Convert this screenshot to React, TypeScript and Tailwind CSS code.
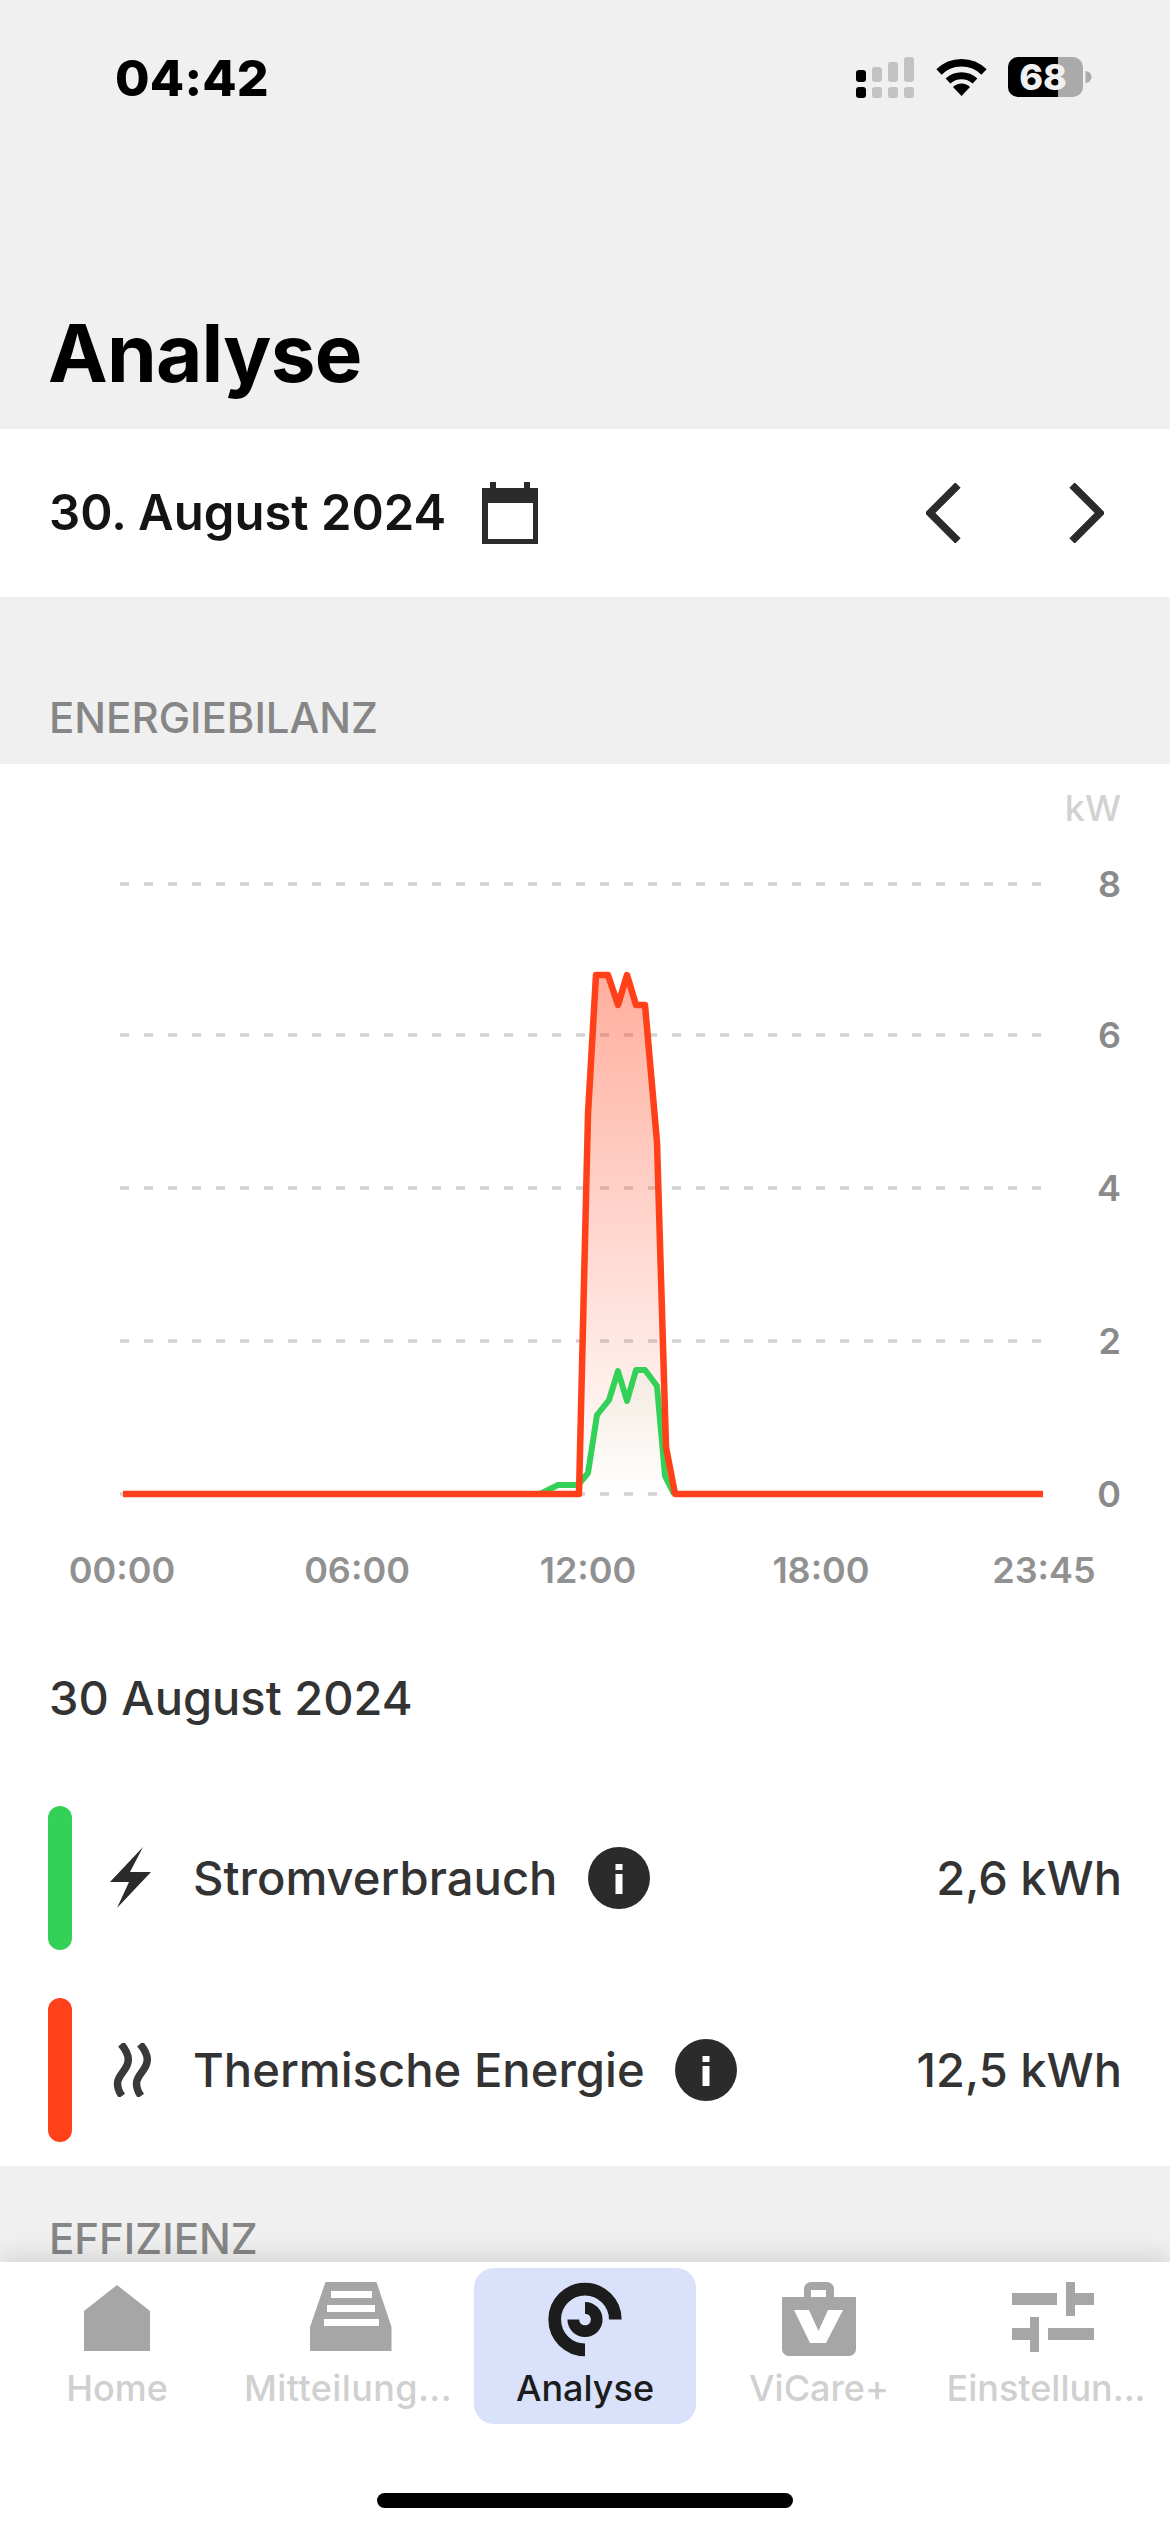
const GRID_Y = [884, 1035, 1188, 1341, 1494]
const Y_LABELS = ['8', '6', '4', '2', '0']
const X_LABELS: [string, number][] = [['00:00', 122], ['06:00', 357], ['12:00', 588], ['18:00', 821], ['23:45', 1044]]

const RED =
  '123,1494 579,1494 588,1114 596,975 608,975 618,1005 627,975 636,1005 645,1005 657,1142 666,1447 675,1494 1043,1494'
const GREEN =
  '540,1494 558,1485 578,1485 588,1473 597,1415 609,1400 618,1371 627,1401 636,1370 645,1370 657,1386 665,1476 674,1494'

function StatusIcons() {
  return (
    <svg width="236" height="48" viewBox="0 -4 236 48" className="block">
      {/* signal, first column filled */}
      <rect x="0" y="13" width="10" height="12" rx="3" fill="#000" />
      <rect x="16" y="10" width="10" height="15" rx="3" fill="#c2c2c2" />
      <rect x="32" y="5" width="10" height="20" rx="3" fill="#c2c2c2" />
      <rect x="48" y="0" width="10" height="25" rx="3" fill="#c2c2c2" />
      <rect x="0" y="30" width="10" height="11" rx="3" fill="#000" />
      <rect x="16" y="30" width="10" height="11" rx="3" fill="#c2c2c2" />
      <rect x="32" y="30" width="10" height="11" rx="3" fill="#c2c2c2" />
      <rect x="48" y="30" width="10" height="11" rx="3" fill="#c2c2c2" />
      {/* wifi */}
      <g transform="translate(3 0)">
        <path d="M80 15 A32 32 0 0 1 125 15" fill="none" stroke="#000" strokeWidth="7.5" />
        <path d="M89 24 A20 20 0 0 1 116 24" fill="none" stroke="#000" strokeWidth="7" />
        <path d="M102.500 39 L94 30 A12 12 0 0 1 111 30 Z" fill="#000" />
      </g>
      {/* battery */}
      <rect x="152" y="0" width="75" height="40" rx="10" fill="#aaa" />
      <path d="M162 0 H202 V40 H162 A10 10 0 0 1 152 30 V10 A10 10 0 0 1 162 0 Z" fill="#000" />
      <path d="M229.500 14 A6 6 0 0 1 229.500 26 Z" fill="#aaa" />
      <text x="187" y="33" textAnchor="middle" fontSize="36" fontWeight="800" fill="#f0f0f0">
        68
      </text>
    </svg>
  )
}

function EnergyChart() {
  return (
    <svg width="1170" height="856" viewBox="0 764 1170 856" className="block">
      <defs>
        <linearGradient id="redFill" x1="0" y1="975" x2="0" y2="1494" gradientUnits="userSpaceOnUse">
          <stop offset="0" stopColor="#ff4019" stopOpacity="0.42" />
          <stop offset="1" stopColor="#ff4019" stopOpacity="0" />
        </linearGradient>
        <linearGradient id="greenFill" x1="0" y1="1370" x2="0" y2="1494" gradientUnits="userSpaceOnUse">
          <stop offset="0" stopColor="#33d158" stopOpacity="0.05" />
          <stop offset="1" stopColor="#33d158" stopOpacity="0" />
        </linearGradient>
      </defs>

      {GRID_Y.map(y => (
        <line key={y} x1="120" x2="1041" y1={y} y2={y} stroke="#d2d2d2" strokeWidth="3.5" strokeDasharray="9 15" />
      ))}

      <polygon points={RED} fill="url(#redFill)" />
      <polygon points={GREEN} fill="url(#greenFill)" />
      <polyline points={GREEN} fill="none" stroke="#33d158" strokeWidth="6" strokeLinejoin="round" />
      <polyline points={RED} fill="none" stroke="#ff4019" strokeWidth="6.500" strokeLinejoin="round" />

      <text x="1121" y="821" textAnchor="end" fontSize="36" fontWeight="500" fill="#d2d2d2">
        kW
      </text>
      {Y_LABELS.map((label, i) => (
        <text key={label} x="1121" y={GRID_Y[i] + 13} textAnchor="end" fontSize="36" fontWeight="600" fill="#8a8a8a">
          {label}
        </text>
      ))}
      {X_LABELS.map(([label, x]) => (
        <text key={label} x={x} y="1583" textAnchor="middle" fontSize="36" fontWeight="600" fill="#919191">
          {label}
        </text>
      ))}
    </svg>
  )
}

function InfoDot() {
  return (
    <svg width="62" height="62" viewBox="0 0 62 62" className="block shrink-0">
      <circle cx="31" cy="31" r="31" fill="#2b2b2b" />
      <rect x="27.500" y="17" width="7" height="6" fill="#fff" />
      <rect x="27.500" y="27" width="7" height="20" fill="#fff" />
    </svg>
  )
}

function BoltIcon() {
  return (
    <svg width="42" height="62" viewBox="0 0 42 62" className="block">
      <path d="M33 0 L20 25 H41 L7 61 L19 35 H0 Z" fill="#2b2b2b" />
    </svg>
  )
}

function HeatIcon() {
  return (
    <svg width="40" height="54" viewBox="0 0 40 54" className="block ml-[3px]">
      <path d="M8 1 C14 8 16 14 15 19 C14 27 5 32 4.500 40 C4.500 45 6 49 9 53" fill="none" stroke="#3a3a3a" strokeWidth="7.500" />
      <path d="M27 1 C33 8 35 14 34 19 C33 27 24 32 23.500 40 C23.500 45 25 49 28 53" fill="none" stroke="#3a3a3a" strokeWidth="7.500" />
    </svg>
  )
}

function LegendRow({ color, icon, label, value }: { color: string; icon: React.ReactNode; label: string; value: string }) {
  return (
    <div className="flex items-center h-[144px] pl-[48px] pr-[48px]">
      <div className={`w-[24px] h-[144px] rounded-full ${color}`} />
      <div className="w-[83px] ml-[38px] flex">{icon}</div>
      <span className="text-[47.2px] leading-[60px] font-medium text-[#333]">{label}</span>
      <div className="ml-[30px]">
        <InfoDot />
      </div>
      <span className="ml-auto text-[47px] leading-[60px] font-medium text-[#333]">{value}</span>
    </div>
  )
}

function HomeIcon() {
  return (
    <svg width="66" height="67" viewBox="0 0 66 67" className="block mt-[3px]">
      <path d="M0 26 L33 0 L66 26 V66 H0 Z" fill="#a6a6a6" />
    </svg>
  )
}

function InboxIcon() {
  return (
    <svg width="82" height="70" viewBox="0 0 82 70" className="block">
      <path
        fillRule="evenodd"
        d="M15.500 0 H66.500 L81.500 45 V69 H0 V45 Z M21 9 V16 H62 V9 Z M17 23 V30 H65 V23 Z M14 37 V44 H69 V37 Z"
        fill="#a6a6a6"
      />
    </svg>
  )
}

function AnalyseIcon() {
  return (
    <svg width="76" height="76" viewBox="0 0 76 76" className="block">
      <path d="M68.300 37.500 A30.300 30.300 0 1 0 38 67.800" fill="none" stroke="#1c1c1c" strokeWidth="12.700" />
      <path d="M38 25.800 A11.700 11.700 0 1 1 26.300 37.500" fill="none" stroke="#1c1c1c" strokeWidth="11.700" />
    </svg>
  )
}

function BagIcon() {
  return (
    <svg width="74" height="74" viewBox="0 0 74 74" className="block">
      <path
        fillRule="evenodd"
        d="M29 0 H45 A7 7 0 0 1 52 7 V15 H74 V67 A7 7 0 0 1 67 74 H7 A7 7 0 0 1 0 67 V15 H22 V7 A7 7 0 0 1 29 0 Z M29 8 V15 H44 V8 Z M12 28 L28 61 H44 L61 28 H46 L36.500 49 L27 28 Z"
        fill="#a6a6a6"
      />
    </svg>
  )
}

function SlidersIcon() {
  return (
    <svg width="82" height="70" viewBox="0 0 82 70" className="block">
      <g fill="#a6a6a6">
        <rect x="0" y="11" width="45" height="12" />
        <rect x="54" y="0" width="9" height="34" />
        <rect x="63" y="11" width="19" height="12" />
        <rect x="0" y="46" width="18" height="12" />
        <rect x="18" y="35" width="9" height="35" />
        <rect x="36" y="46" width="46" height="12" />
      </g>
    </svg>
  )
}

const TABS = [
  { label: 'Home', icon: <HomeIcon />, labelClass: '' },
  { label: 'Mitteilung...', icon: <InboxIcon />, labelClass: '-ml-[6px] tracking-[0.4px]' },
  { label: 'Analyse', icon: <AnalyseIcon />, labelClass: '', active: true },
  { label: 'ViCare+', icon: <BagIcon />, labelClass: '' },
  { label: 'Einstellun...', icon: <SlidersIcon />, labelClass: '-ml-[14px]' },
]

export default function App() {
  return (
    <div className="w-[1170px] h-[2532px] flex flex-col overflow-hidden bg-[#f0f0f0] font-[Inter,sans-serif]">
      <div className="flex-1 min-h-0">
        {/* Status bar + title */}
        <div className="h-[429px] flex flex-col justify-between">
          <div className="flex items-start justify-between pt-[48px] pl-[115px] pr-[78px]">
            <span className="text-[50px] leading-[60px] font-extrabold text-black tracking-[0.2px]">04:42</span>
            <div className="pt-[5px]">
              <StatusIcons />
            </div>
          </div>
          <h1 className="pl-[48px] pb-[28px] text-[80px] leading-[96px] font-bold text-black tracking-[-0.8px]">
            Analyse
          </h1>
        </div>

        {/* Date selector */}
        <div className="h-[168px] bg-white flex items-center pl-[49px] pr-[66px]">
          <span className="text-[49px] leading-[60px] font-semibold text-[#141414]">30. August 2024</span>
          <svg width="56" height="62" viewBox="0 0 56 62" className="block ml-[36px]">
            <path
              fillRule="evenodd"
              d="M8 0 H14 V6 H42 V0 H48 V6 H56 V62 H0 V6 H8 Z M6 21 V57 H51 V21 Z"
              fill="#2b2b2b"
            />
          </svg>
          <div className="ml-auto flex items-center gap-[106px]">
            <svg width="36" height="60" viewBox="0 0 36 60" className="block">
              <path d="M32 2 L4 30 L32 58" fill="none" stroke="#2b2b2b" strokeWidth="7.500" />
            </svg>
            <svg width="36" height="60" viewBox="0 0 36 60" className="block">
              <path d="M4 2 L32 30 L4 58" fill="none" stroke="#2b2b2b" strokeWidth="7.500" />
            </svg>
          </div>
        </div>

        <div className="h-[167px] flex items-end pl-[49px] pb-[22px]">
          <span className="text-[42px] leading-[48px] font-medium text-[#868686]">ENERGIEBILANZ</span>
        </div>

        {/* Chart + legend */}
        <div className="h-[1402px] bg-white">
          <EnergyChart />
          <div className="pl-[49px] mt-[50px] h-[56px] text-[47px] leading-[56px] font-medium text-[#333]">
            30 August 2024
          </div>
          <div className="mt-[80px] flex flex-col gap-[48px]">
            <LegendRow color="bg-[#33d158]" icon={<BoltIcon />} label="Stromverbrauch" value="2,6 kWh" />
            <LegendRow color="bg-[#ff4019]" icon={<HeatIcon />} label="Thermische Energie" value="12,5 kWh" />
          </div>
        </div>

        <div className="pl-[49px] pt-[51px]">
          <span className="block text-[42px] leading-[44px] font-medium text-[#868686]">EFFIZIENZ</span>
        </div>
      </div>

      {/* Tab bar */}
      <div className="relative h-[270px] shrink-0 bg-white shadow-[0_-6px_24px_rgba(0,0,0,0.12)]">
        <div className="grid grid-cols-5 pt-[6px]">
          {TABS.map(tab => (
            <div key={tab.label} className="px-[6px]">
              <div
                className={[
                  'h-[156px] rounded-[20px] flex flex-col items-center pt-[14px]',
                  tab.active ? 'bg-[#d9e2fa]' : '',
                ].join(' ')}
              >
                <div className="h-[74px] flex items-start justify-center">{tab.icon}</div>
                <span
                  className={[
                    'mt-[12px] text-[36px] leading-[40px] font-medium whitespace-nowrap',
                    tab.active ? 'text-[#1c1c1c]' : 'text-[#d0d0d0]',
                    tab.labelClass,
                  ].join(' ')}
                >
                  {tab.label}
                </span>
              </div>
            </div>
          ))}
        </div>
        <div className="absolute left-[377px] top-[231px] w-[416px] h-[15px] rounded-full bg-black" />
      </div>
    </div>
  )
}
